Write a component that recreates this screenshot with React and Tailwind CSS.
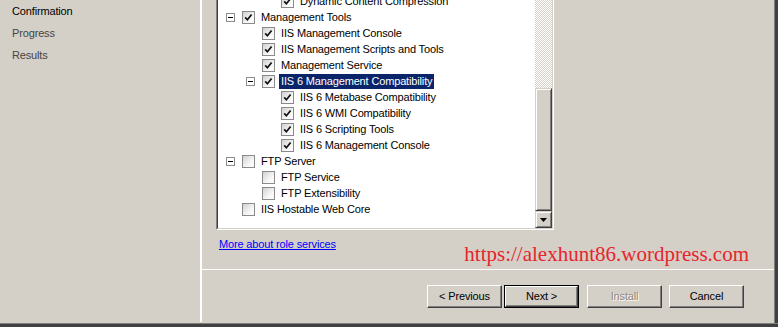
import React from "react";

const rows = [
  { t: "Dynamic Content Compression", l: 3, c: true },
  { t: "Management Tools", l: 1, c: true, e: true },
  { t: "IIS Management Console", l: 2, c: true },
  { t: "IIS Management Scripts and Tools", l: 2, c: true },
  { t: "Management Service", l: 2, c: true },
  { t: "IIS 6 Management Compatibility", l: 2, c: true, e: true, s: true },
  { t: "IIS 6 Metabase Compatibility", l: 3, c: true },
  { t: "IIS 6 WMI Compatibility", l: 3, c: true },
  { t: "IIS 6 Scripting Tools", l: 3, c: true },
  { t: "IIS 6 Management Console", l: 3, c: true },
  { t: "FTP Server", l: 1, c: false, e: true },
  { t: "FTP Service", l: 2, c: false },
  { t: "FTP Extensibility", l: 2, c: false },
  { t: "IIS Hostable Web Core", l: 1, c: false },
];

const pad = { 1: "pl-[8px]", 2: "pl-[28px]", 3: "pl-[47px]" };

function Checkbox({ checked }) {
  return (
    <div className="w-[13px] h-[13px] shrink-0 border border-[#8a8a8a] bg-[linear-gradient(135deg,#d2cfd2,#fbfafb_70%)] flex items-center justify-center">
      {checked && (
        <svg width="11" height="11" viewBox="0 0 11 11">
          <path d="M2.2 5.4 L4.4 7.8 L8.6 2.4" stroke="#111" strokeWidth="1.7" fill="none" />
        </svg>
      )}
    </div>
  );
}

function Expander() {
  return (
    <div className="w-[9px] h-[9px] border border-[#8c8c8c] bg-white flex items-center justify-center mr-[7px] shrink-0">
      <div className="w-[5px] h-px bg-black" />
    </div>
  );
}

function Raised({ className = "", children }) {
  return (
    <div
      className={
        "border border-t-[#d4d0c8] border-l-[#d4d0c8] border-r-[#404040] border-b-[#404040] shadow-[inset_1px_1px_#ffffff,inset_-1px_-1px_#808080] bg-[#d4d0c8] " +
        className
      }
    >
      {children}
    </div>
  );
}

function Button({ children, def, disabled }) {
  const inner = (
    <div className="w-full h-full border border-t-white border-l-white border-r-[#404040] border-b-[#404040] shadow-[inset_-1px_-1px_#808080] bg-[#d4d0c8] flex items-center justify-center">
      <span
        className={
          disabled
            ? "text-[#8c8a86] [text-shadow:1px_1px_#ffffff]"
            : "text-black"
        }
      >
        {children}
      </span>
    </div>
  );
  if (def)
    return <div className="w-[75px] h-[23px] border border-black">{inner}</div>;
  return <div className="w-[75px] h-[23px]">{inner}</div>;
}

export default function App() {
  return (
    <div className="w-[778px] h-[327px] bg-[#d4d0c8] overflow-hidden flex flex-col font-['Liberation_Sans',Arial,sans-serif] text-[11px] tracking-[-0.15px] text-black">
      <div className="flex h-[323px]">
        {/* left pane */}
        <div className="w-[200px] shrink-0 flex flex-col pl-[12px] leading-[22px]">
          <div className="text-black">Confirmation</div>
          <div className="text-[#444444]">Progress</div>
          <div className="text-[#444444]">Results</div>
        </div>
        <div className="w-[2px] h-[322px] bg-white shrink-0" />
        {/* right content */}
        <div className="w-[572px] shrink-0 flex flex-col">
          <div className="h-[269px] overflow-hidden flex flex-col">
            {/* tree box */}
            <div className="ml-[14px] -mt-[40px] w-[338px] h-[270px] shrink-0 border border-t-[#808080] border-l-[#808080] border-r-white border-b-white">
              <div className="w-full h-full border border-t-[#404040] border-l-[#404040] border-r-[#d4d0c8] border-b-[#d4d0c8] bg-white flex">
                <div className="flex-1 pt-[31px] flex flex-col">
                  {rows.map((r, i) => (
                    <div key={i} className={"flex items-center h-4 " + pad[r.l]}>
                      {r.e ? <Expander /> : <div className="w-[16px] shrink-0" />}
                      <Checkbox checked={r.c} />
                      <span
                        className={
                          "ml-[4px] px-[2px] h-[15px] leading-[15px] whitespace-nowrap self-end " +
                          (r.s ? "bg-[#0a246a] text-white" : "")
                        }
                      >
                        {r.t}
                      </span>
                    </div>
                  ))}
                </div>
                {/* scrollbar */}
                <div className="w-[17px] shrink-0 flex flex-col">
                  <Raised className="h-[17px] shrink-0" />
                  <div className="h-[109px] shrink-0 bg-[image:repeating-conic-gradient(#d4d0c8_0_25%,#ffffff_0_50%)] bg-[length:2px_2px]" />
                  <Raised className="h-[123px] shrink-0" />
                  <Raised className="h-[17px] shrink-0 flex items-center justify-center">
                    <svg width="7" height="4" viewBox="0 0 7 4">
                      <polygon points="0,0 7,0 3.5,4" fill="#000" />
                    </svg>
                  </Raised>
                </div>
              </div>
            </div>
            <div className="flex items-start">
              <a className="ml-[17px] mt-[8px] leading-[13px] text-[#0000ff] underline underline-offset-1 whitespace-nowrap cursor-pointer">
                More about role services
              </a>
              <div className="ml-auto mr-[25px] mt-[14px] leading-[21px] text-[21px] tracking-normal text-[#e8242c] font-['Liberation_Serif','Times_New_Roman',serif] whitespace-nowrap">
                https://alexhunt86.wordpress.com
              </div>
            </div>
          </div>
          <div className="h-px bg-white shrink-0" />
          <div className="flex-1 flex justify-end items-start pt-[15px] pr-[30px]">
            <Button>&lt; Previous</Button>
            <div className="w-[2px]" />
            <Button def>Next &gt;</Button>
            <div className="w-[8px]" />
            <Button disabled>Install</Button>
            <div className="w-[7px]" />
            <Button>Cancel</Button>
          </div>
        </div>
        <div className="w-px bg-[#808080] shrink-0" />
        <div className="w-[3px] bg-[#404040] shrink-0" />
      </div>
      <div className="h-px bg-[#808080] shrink-0" />
      <div className="h-[3px] bg-[#404040] shrink-0" />
    </div>
  );
}
